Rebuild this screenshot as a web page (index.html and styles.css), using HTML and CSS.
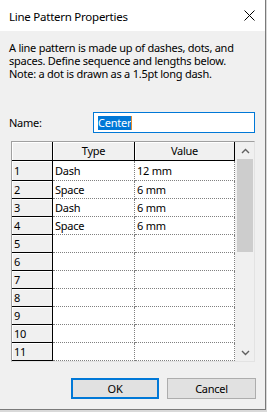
FILE: index.html
```html
<!DOCTYPE html>
<html lang="en">
<head>
    <meta charset="UTF-8">
    <meta name="viewport" content="width=device-width, initial-scale=1.0">
    <title>Line Pattern Properties</title>
    <link rel="stylesheet" href="styles.css">
</head>
<body>
    <div class="dialog">
        <div class="titlebar">
            <span class="title">Line Pattern Properties</span>
            <svg class="close" width="11" height="11" viewBox="0 0 11 11">
                <path d="M0.5 0.5 L10.5 10.5 M10.5 0.5 L0.5 10.5" stroke="#000" stroke-width="1" fill="none"/>
            </svg>
        </div>
        <div class="content">
            <p class="intro">A line pattern is made up of dashes, dots, and<br>spaces. Define sequence and lengths below.<br>Note: a dot is drawn as a 1.5pt long dash.</p>

            <div class="name-row">
                <label class="name-label">Name:</label>
                <div class="name-input"><span class="selected">Center</span><span class="caret"></span></div>
            </div>

            <div class="sheet">
                <div class="cells">
                    <div class="hd"></div>
                    <div class="hd center">Type</div>
                    <div class="hd center">Value</div>

                    <div class="rh">1</div><div class="cell">Dash</div><div class="cell">12 mm</div>
                    <div class="rh">2</div><div class="cell">Space</div><div class="cell">6 mm</div>
                    <div class="rh">3</div><div class="cell">Dash</div><div class="cell">6 mm</div>
                    <div class="rh">4</div><div class="cell">Space</div><div class="cell">6 mm</div>
                    <div class="rh">5</div><div class="cell"></div><div class="cell"></div>
                    <div class="rh">6</div><div class="cell"></div><div class="cell"></div>
                    <div class="rh">7</div><div class="cell"></div><div class="cell"></div>
                    <div class="rh">8</div><div class="cell"></div><div class="cell"></div>
                    <div class="rh">9</div><div class="cell"></div><div class="cell"></div>
                    <div class="rh">10</div><div class="cell"></div><div class="cell"></div>
                    <div class="rh">11</div><div class="cell"></div><div class="cell"></div>
                </div>
                <div class="vscroll">
                    <div class="arrow">
                        <svg width="9" height="6" viewBox="0 0 9 6"><path d="M1 5 L4.5 1.5 L8 5" stroke="#606060" stroke-width="1.4" fill="none"/></svg>
                    </div>
                    <div class="thumb"></div>
                    <div class="track"></div>
                    <div class="arrow">
                        <svg width="9" height="6" viewBox="0 0 9 6"><path d="M1 1 L4.5 4.5 L8 1" stroke="#606060" stroke-width="1.4" fill="none"/></svg>
                    </div>
                </div>
            </div>

            <div class="buttons">
                <button class="btn default">OK</button>
                <button class="btn cancel">Cancel</button>
            </div>
        </div>
    </div>
</body>
</html>
```

FILE: styles.css
```css
body {
    margin: 0;
    padding: 0;
    background-color: #d9d9d9;
    font-family: "Noto Sans", "Open Sans", sans-serif;
    font-size: 11px;
    letter-spacing: -0.25px;
    color: #000;
}
.dialog {
    width: 265px;
    height: 409px;
    background-color: #f0f0f0;
    border-right: 1px solid #7a7a7a;
    border-bottom: 1px solid #7a7a7a;
}
.titlebar {
    height: 31px;
    background-color: #fff;
    display: flex;
    align-items: center;
    justify-content: space-between;
    padding: 0 10px 0 9px;
}
.title {
    font-size: 11.5px;
    margin-top: 1px;
}
.close {
    display: block;
}
.content {
    padding: 10px 10px 0 9px;
}
.intro {
    margin: 0;
    line-height: 13px;
    white-space: nowrap;
}
.name-row {
    display: flex;
    align-items: center;
    margin-top: 32px;
    height: 21px;
}
.name-label {
    width: 84px;
}
.name-input {
    flex: 1;
    height: 21px;
    box-sizing: border-box;
    border: 1px solid #0078d7;
    background-color: #fff;
    display: flex;
    align-items: center;
    padding-left: 4px;
}
.selected {
    background-color: #0078d7;
    color: #fff;
    line-height: 14px;
}
.caret {
    width: 1px;
    height: 14px;
    background-color: #e08a2e;
}
.sheet {
    display: flex;
    margin-top: 8px;
    margin-left: 2px;
    border: 1px solid;
    border-color: #a0a0a0 #e3e3e3 #e3e3e3 #a0a0a0;
}
.cells {
    display: grid;
    grid-template-columns: 41px 82px 100px;
    grid-template-rows: 19px 20px repeat(10, 18px);
    background-color: #fff;
}
.cells > div {
    box-sizing: border-box;
    display: flex;
    align-items: center;
    padding-left: 2px;
    white-space: nowrap;
    line-height: 14px;
}
.hd, .rh {
    background-color: #f0f0f0;
    border-right: 1px solid #000;
    border-bottom: 1px solid #000;
    box-shadow: inset 1px 1px #fff;
}
.cells > .center {
    justify-content: center;
    padding-left: 0;
}
.cell {
    border-right: 1px dotted #808080;
    border-bottom: 1px dotted #808080;
}
.vscroll {
    width: 19px;
    display: flex;
    flex-direction: column;
    background-color: #f0f0f0;
}
.arrow {
    height: 17px;
    display: flex;
    align-items: center;
    justify-content: center;
    padding-left: 1px;
}
.arrow svg {
    display: block;
}
.thumb {
    height: 93px;
    margin: 0 1px 0 2px;
    background-color: #cdcdcd;
}
.track {
    flex: 1;
}
.buttons {
    display: flex;
    justify-content: flex-end;
    gap: 8px;
    margin-top: 16px;
    margin-right: -1px;
}
.btn {
    height: 21px;
    box-sizing: border-box;
    background-color: #e1e1e1;
    border: 1px solid #adadad;
    font-family: "Noto Sans", "Open Sans", sans-serif;
    font-size: 11px;
    letter-spacing: -0.25px;
    color: #000;
    padding: 0;
    margin: 0;
}
.default {
    width: 88px;
    border: 2px solid #0078d7;
}
.cancel {
    width: 89px;
}
```
